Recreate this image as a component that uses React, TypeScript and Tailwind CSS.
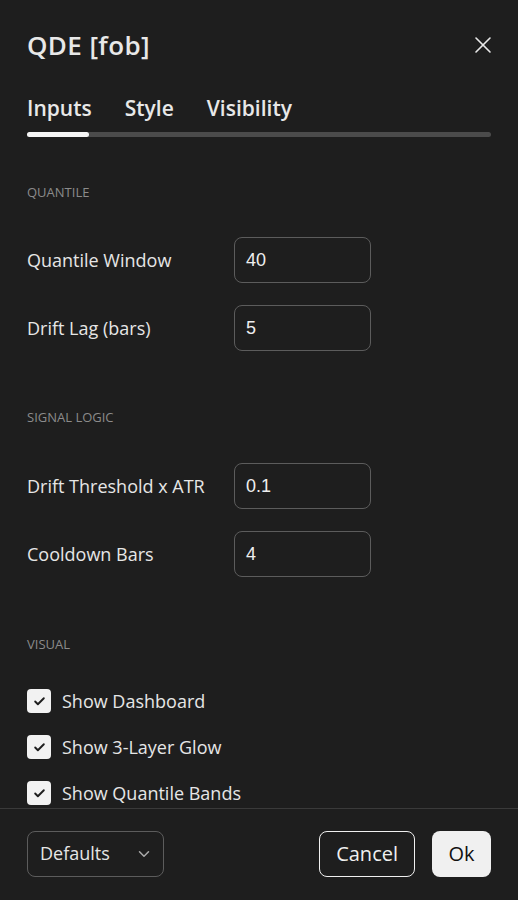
import { Check, ChevronDown, X } from 'lucide-react'

const font = { fontFamily: '"Open Sans", "DejaVu Sans", sans-serif' }

function Section({ title, first }: { title: string; first?: boolean }) {
    return (
        <div className={`shrink-0 h-[22px] ${first ? 'mt-[45px] mb-[33px]' : 'mt-[34px] mb-[34px]'} flex items-center text-[13px] text-[#8b8b8b] uppercase`}>
            {title}
        </div>
    )
}

function Field({ label, value, last }: { label: string; value: string; last?: boolean }) {
    return (
        <div className={`shrink-0 flex items-center h-[46px] ${last ? '' : 'mb-[22px]'}`}>
            <div className="w-[207px] text-[18px] text-[#e6e6e6]">{label}</div>
            <div className="w-[137px] h-[46px] rounded-[8px] border border-[#5c5c5c] flex items-center px-[11px] text-[18px] text-[#eeeeee]" style={{ fontFamily: '"Liberation Sans", Arial, sans-serif' }}>
                {value}
            </div>
        </div>
    )
}

function CheckRow({ label }: { label: string }) {
    return (
        <div className="flex items-center h-[46px] gap-[11px] shrink-0">
            <div className="w-[24px] h-[24px] rounded-[4px] bg-[#f2f2f2] flex items-center justify-center">
                <Check className="w-[13px] h-[13px] text-[#1e1e1e]" strokeWidth={3.5} />
            </div>
            <span className="text-[18px] text-[#e6e6e6]">{label}</span>
        </div>
    )
}

export default function App() {
    return (
        <div className="h-[900px] w-[518px] bg-[#1e1e1e] text-white flex flex-col overflow-hidden" style={font}>
            {/* Header */}
            <div className="shrink-0 px-[27px] pt-[24px] flex items-center justify-between h-[66px]">
                <h1 className="text-[26px] font-semibold text-[#e8e8e8] tracking-[0.4px]">QDE [fob]</h1>
                <X className="w-[28px] h-[28px] text-[#e8e8e8] -mr-[6px]" strokeWidth={1.4} />
            </div>

            {/* Tabs */}
            <div className="shrink-0 px-[27px] mt-[29px]">
                <div className="flex gap-[33px] text-[21px] font-semibold text-[#e8e8e8] h-[28px] items-center">
                    <span>Inputs</span>
                    <span>Style</span>
                    <span>Visibility</span>
                </div>
                <div className="mt-[9px] h-[5px] rounded-full bg-[#4b4b4b] relative">
                    <div className="absolute left-0 top-0 h-[5px] w-[62px] rounded-full bg-[#f5f5f5]" />
                </div>
            </div>

            {/* Content */}
            <div className="flex-1 overflow-hidden px-[27px] flex flex-col">
                <Section title="Quantile" first />
                <Field label="Quantile Window" value="40" />
                <Field label="Drift Lag (bars)" value="5" last />
                <div className="h-[22px] shrink-0" />
                <Section title="Signal Logic" />
                <Field label="Drift Threshold x ATR" value="0.1" />
                <Field label="Cooldown Bars" value="4" last />
                <div className="h-[23px] shrink-0" />
                <Section title="Visual" />
                <div className="-mt-[12px] flex flex-col shrink-0">
                    <CheckRow label="Show Dashboard" />
                    <CheckRow label="Show 3-Layer Glow" />
                    <CheckRow label="Show Quantile Bands" />
                </div>
            </div>

            {/* Footer */}
            <div className="border-t border-[#3a3a3a] h-[92px] px-[27px] flex items-center justify-between pb-[2px] shrink-0">
                <div className="w-[137px] h-[46px] rounded-[8px] border border-[#5c5c5c] flex items-center justify-between pl-[12px] pr-[10px] text-[18px] text-[#e6e6e6]">
                    <span>Defaults</span>
                    <ChevronDown className="w-[18px] h-[18px] text-[#aaaaaa]" />
                </div>
                <div className="flex gap-[17px]">
                    <button className="h-[46px] px-[16px] rounded-[8px] border-[1.5px] border-[#f0f0f0] text-[20px] text-[#f0f0f0]">Cancel</button>
                    <button className="h-[46px] w-[59px] rounded-[8px] bg-[#f0f0f0] text-[20px] text-[#111111]">Ok</button>
                </div>
            </div>
        </div>
    )
}
